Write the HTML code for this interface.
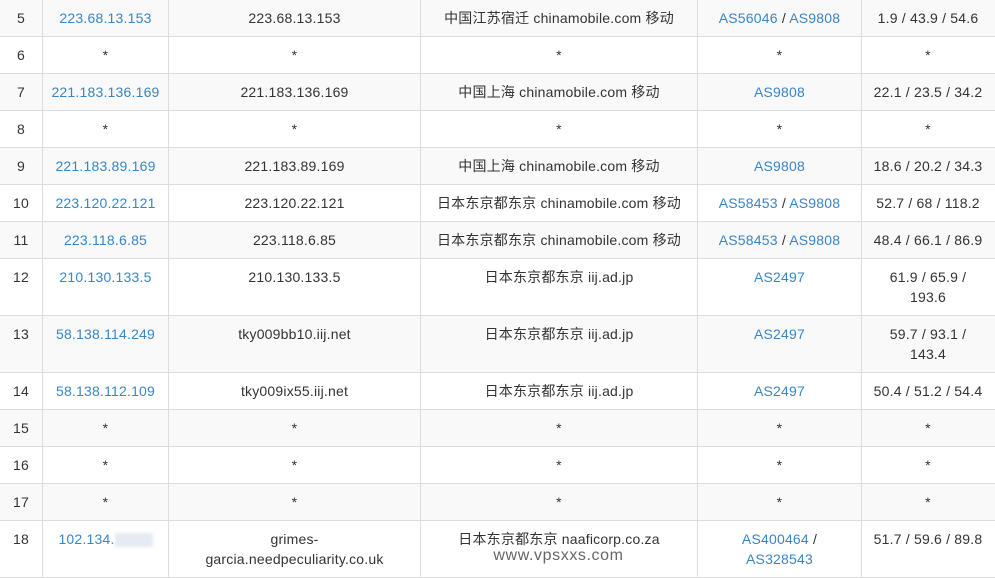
<!DOCTYPE html>
<html><head><meta charset="utf-8"><style>
body{margin:0;width:995px;height:575px;overflow:hidden;background:#fff;font-family:"Liberation Sans","Noto Sans CJK SC",sans-serif;font-size:14px;color:#333}
table{position:absolute;top:-1px;left:-1px;border-collapse:collapse;table-layout:fixed;width:1003px}
td{border:1px solid #ddd;text-align:center;vertical-align:top;padding:8px 2px 0;line-height:20px;box-sizing:border-box;white-space:nowrap;letter-spacing:0.2px}
tr{height:37px}
tr.t{height:57px}
tr:nth-child(odd){background:#f9f9f9}
a{color:#3a85c6;text-decoration:none}
td:last-child{padding-right:10px}
</style></head><body>
<table>
<colgroup><col style="width:43px"><col style="width:126px"><col style="width:252px"><col style="width:277px"><col style="width:164px"><col style="width:141px"></colgroup>
<tr><td>5</td><td><a>223.68.13.153</a></td><td>223.68.13.153</td><td>中国江苏宿迁 chinamobile.com 移动</td><td><a>AS56046</a> / <a>AS9808</a></td><td>1.9 / 43.9 / 54.6</td></tr>
<tr><td>6</td><td>*</td><td>*</td><td>*</td><td>*</td><td>*</td></tr>
<tr><td>7</td><td><a>221.183.136.169</a></td><td>221.183.136.169</td><td>中国上海 chinamobile.com 移动</td><td><a>AS9808</a></td><td>22.1 / 23.5 / 34.2</td></tr>
<tr><td>8</td><td>*</td><td>*</td><td>*</td><td>*</td><td>*</td></tr>
<tr><td>9</td><td><a>221.183.89.169</a></td><td>221.183.89.169</td><td>中国上海 chinamobile.com 移动</td><td><a>AS9808</a></td><td>18.6 / 20.2 / 34.3</td></tr>
<tr><td>10</td><td><a>223.120.22.121</a></td><td>223.120.22.121</td><td>日本东京都东京 chinamobile.com 移动</td><td><a>AS58453</a> / <a>AS9808</a></td><td>52.7 / 68 / 118.2</td></tr>
<tr><td>11</td><td><a>223.118.6.85</a></td><td>223.118.6.85</td><td>日本东京都东京 chinamobile.com 移动</td><td><a>AS58453</a> / <a>AS9808</a></td><td>48.4 / 66.1 / 86.9</td></tr>
<tr class="t"><td>12</td><td><a>210.130.133.5</a></td><td>210.130.133.5</td><td>日本东京都东京 iij.ad.jp</td><td><a>AS2497</a></td><td>61.9 / 65.9 /<br>193.6</td></tr>
<tr class="t"><td>13</td><td><a>58.138.114.249</a></td><td>tky009bb10.iij.net</td><td>日本东京都东京 iij.ad.jp</td><td><a>AS2497</a></td><td>59.7 / 93.1 /<br>143.4</td></tr>
<tr><td>14</td><td><a>58.138.112.109</a></td><td>tky009ix55.iij.net</td><td>日本东京都东京 iij.ad.jp</td><td><a>AS2497</a></td><td>50.4 / 51.2 / 54.4</td></tr>
<tr><td>15</td><td>*</td><td>*</td><td>*</td><td>*</td><td>*</td></tr>
<tr><td>16</td><td>*</td><td>*</td><td>*</td><td>*</td><td>*</td></tr>
<tr><td>17</td><td>*</td><td>*</td><td>*</td><td>*</td><td>*</td></tr>
<tr class="t"><td>18</td><td><a>102.134.</a><span style="display:inline-block;width:38px;height:14px;background:#e4ebf2;vertical-align:middle;filter:blur(1.5px)"></span></td><td>grimes-<br>garcia.needpeculiarity.co.uk</td><td>日本东京都东京 naaficorp.co.za</td><td><a>AS400464</a> /<br><a>AS328543</a></td><td>51.7 / 59.6 / 89.8</td></tr>
</table>
<div style="position:absolute;left:420px;width:277px;top:547px;text-align:center;font-size:16px;color:#666;letter-spacing:0.6px">www.vpsxxs.com</div>
</body></html>
